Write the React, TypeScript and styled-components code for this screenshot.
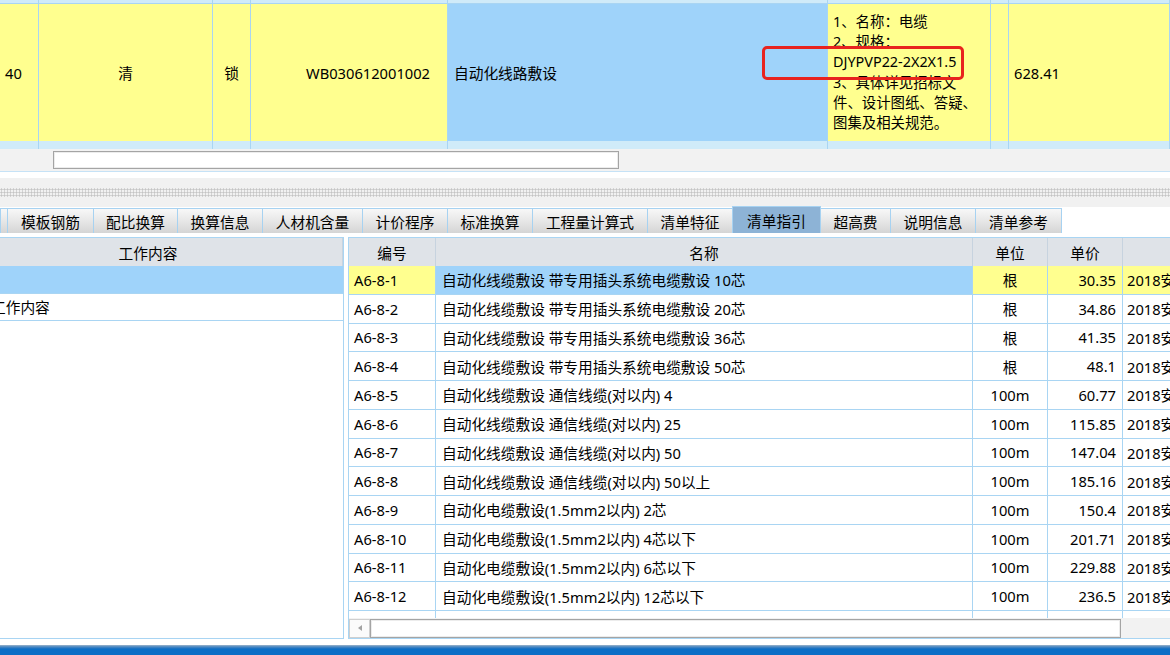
import React from 'react';
import styled, { createGlobalStyle } from 'styled-components';

const GlobalStyle = createGlobalStyle`
  html, body {
    margin: 0;
    padding: 0;
    background: #ffffff;
  }
  body {
    font-family: "Noto Sans", "Noto Sans CJK SC", sans-serif;
    font-size: 14.7px;
    color: #000;
    overflow: hidden;
  }
  * {
    box-sizing: border-box;
  }
`;

const LINE = '#a9d5f3';
const YELLOW = '#ffff8f';
const BLUE = '#9fd3fa';

/** Page */
const Page = styled.div`
  width: 1170px;
  height: 655px;
  display: flex;
  flex-direction: column;
  overflow: hidden;
`;

/** Top grid (bill row) */
const TopPane = styled.div`
  position: relative;
  border-bottom: 1px solid #c6e2f6;
`;

const topCols = '39px 174px 38px 197px 380px 163px 18px 1fr';

const TopRow = styled.div<{ $h: number; $strip?: boolean }>`
  display: grid;
  grid-template-columns: ${topCols};
  height: ${p => p.$h}px;
  background: ${p => (p.$strip ? '#d0ebf9' : YELLOW)};
  border-top: ${p => (p.$strip ? 'none' : `1px solid ${LINE}`)};
`;

const TopCell = styled.div<{ $align?: 'left' | 'center' | 'right'; $blue?: boolean }>`
  border-right: 1px solid ${LINE};
  display: flex;
  align-items: center;
  justify-content: ${p =>
    p.$align === 'center' ? 'center' : p.$align === 'right' ? 'flex-end' : 'flex-start'};
  padding: ${p => (p.$align === 'right' ? '0 17px 0 0' : '0 5px')};
  background: ${p => (p.$blue ? BLUE : 'transparent')};
  white-space: nowrap;
  overflow: hidden;
`;

const FeatureText = styled.div`
  line-height: 20.2px;
  font-size: 14.4px;
  padding-left: 0;
  white-space: nowrap;
`;

const Highlight = styled.div`
  position: absolute;
  left: 762px;
  top: 46px;
  width: 202px;
  height: 34px;
  border: 3px solid #e8231e;
  border-radius: 5px;
  pointer-events: none;
`;

/** Scrollbars */
const HScroll = styled.div<{ $h: number }>`
  height: ${p => p.$h}px;
  background: #f2f2f2;
  display: flex;
  align-items: center;
  flex-shrink: 0;
`;

const Thumb = styled.div<{ $left: number; $width: number }>`
  margin-left: ${p => p.$left}px;
  width: ${p => p.$width}px;
  height: 18px;
  background: #fff;
  border: 1px solid #a4a4a4;
  box-shadow: inset 0 0 0 1px #ececec;
`;

const ArrowButton = styled.div`
  width: 21px;
  height: 19px;
  border: 1px solid #cfcfcf;
  background: #fbfbfb;
  display: flex;
  align-items: center;
  justify-content: center;
  flex-shrink: 0;
  &::before {
    content: '';
    border-style: solid;
    border-width: 3.5px 4px 3.5px 0;
    border-color: transparent #a2a2a2 transparent transparent;
  }
`;

/** Splitter */
const Gap = styled.div<{ $h: number }>`
  height: ${p => p.$h}px;
  flex-shrink: 0;
`;

const Splitter = styled.div`
  height: 29px;
  background: #f1f1f1;
  padding-top: 10px;
  flex-shrink: 0;
`;

const Dots = styled.div`
  height: 9px;
  background-image: radial-gradient(circle, #c4c4c4 0.9px, transparent 1.2px);
  background-size: 3px 3px;
`;

/** Tabs */
const TabBar = styled.div`
  height: 26px;
  display: flex;
  align-items: flex-end;
  background: #fff;
  flex-shrink: 0;
`;

const Tab = styled.div<{ $active?: boolean; $w: number }>`
  width: ${p => p.$w}px;
  height: ${p => (p.$active ? 27 : 25)}px;
  margin-left: -1px;
  border: 1px solid #a7d2f1;
  border-bottom: none;
  display: flex;
  align-items: center;
  justify-content: center;
  white-space: nowrap;
  background: ${p => (p.$active ? '#8db3d6' : 'linear-gradient(#f8f8f8, #d5d5d5)')};
  flex-shrink: 0;
  &:first-child {
    margin-left: 0;
  }
`;

/** Panels */
const Panels = styled.div`
  height: 402px;
  display: flex;
  gap: 4px;
  flex-shrink: 0;
`;

const LeftPanel = styled.div`
  width: 344px;
  border: 1px solid ${LINE};
  border-left: none;
  overflow: hidden;
  flex-shrink: 0;
`;

const Scrolled = styled.div`
  margin-left: -46px;
  width: 389px;
`;

const HeaderCell = styled.div`
  height: 28px;
  background: #dfe3e8;
  display: flex;
  align-items: center;
  justify-content: center;
  border-right: 1px solid #c7d3df;
  white-space: nowrap;
  overflow: hidden;
`;

const LeftRow = styled.div<{ $selected?: boolean }>`
  height: 27.5px;
  display: flex;
  align-items: center;
  padding-left: 37px;
  background: ${p => (p.$selected ? BLUE : '#fff')};
  border-bottom: 1px solid ${LINE};
  white-space: nowrap;
`;

const RightPanel = styled.div`
  flex: 1;
  margin-right: -20px;
  border: 1px solid ${LINE};
  border-right: none;
  display: flex;
  flex-direction: column;
  overflow: hidden;
  min-width: 0;
`;

const cols = '87px 537px 75px 75px 220px';

const GridHead = styled.div`
  display: grid;
  grid-template-columns: ${cols};
  flex-shrink: 0;
`;

const Body = styled.div`
  flex: 1;
  overflow: hidden;
`;

const GridRowBox = styled.div`
  display: grid;
  grid-template-columns: ${cols};
  height: 28.75px;
`;

const Cell = styled.div<{ $align?: 'left' | 'center' | 'right'; $bg?: string }>`
  border-right: 1px solid ${LINE};
  border-bottom: 1px solid ${LINE};
  display: flex;
  align-items: center;
  justify-content: ${p =>
    p.$align === 'center' ? 'center' : p.$align === 'right' ? 'flex-end' : 'flex-start'};
  padding: 0 6px 0 ${p => (p.$align === 'right' ? 0 : 6)}px;
  background: ${p => p.$bg || '#fff'};
  white-space: nowrap;
  overflow: hidden;
`;

const CodeCell = styled(Cell)`
  padding-left: 5px;
`;

const LastCell = styled(Cell)`
  padding-left: 4px;
`;

const StatusBar = styled.div`
  height: 10px;
  flex-shrink: 0;
  background: linear-gradient(#a4b9cc 0, #6b98c4 1px, #2a78c2 3px, #0c6ec6 4px, #0c6ec6 100%);
`;

/** Data */
const tabs: { label: string; w: number; active?: boolean }[] = [
  { label: '', w: 8 },
  { label: '模板钢筋', w: 87 },
  { label: '配比换算', w: 85 },
  { label: '换算信息', w: 86 },
  { label: '人材机含量', w: 101 },
  { label: '计价程序', w: 86 },
  { label: '标准换算', w: 86 },
  { label: '工程量计算式', w: 116 },
  { label: '清单特征', w: 86 },
  { label: '清单指引', w: 89, active: true },
  { label: '超高费', w: 71 },
  { label: '说明信息', w: 86 },
  { label: '清单参考', w: 87 },
];

const rows: [string, string, string, string][] = [
  ['A6-8-1', '自动化线缆敷设 带专用插头系统电缆敷设 10芯', '根', '30.35'],
  ['A6-8-2', '自动化线缆敷设 带专用插头系统电缆敷设 20芯', '根', '34.86'],
  ['A6-8-3', '自动化线缆敷设 带专用插头系统电缆敷设 36芯', '根', '41.35'],
  ['A6-8-4', '自动化线缆敷设 带专用插头系统电缆敷设 50芯', '根', '48.1'],
  ['A6-8-5', '自动化线缆敷设 通信线缆(对以内) 4', '100m', '60.77'],
  ['A6-8-6', '自动化线缆敷设 通信线缆(对以内) 25', '100m', '115.85'],
  ['A6-8-7', '自动化线缆敷设 通信线缆(对以内) 50', '100m', '147.04'],
  ['A6-8-8', '自动化线缆敷设 通信线缆(对以内) 50以上', '100m', '185.16'],
  ['A6-8-9', '自动化电缆敷设(1.5mm2以内) 2芯', '100m', '150.4'],
  ['A6-8-10', '自动化电缆敷设(1.5mm2以内) 4芯以下', '100m', '201.71'],
  ['A6-8-11', '自动化电缆敷设(1.5mm2以内) 6芯以下', '100m', '229.88'],
  ['A6-8-12', '自动化电缆敷设(1.5mm2以内) 12芯以下', '100m', '236.5'],
  ['A6-8-13', '自动化电缆敷设(1.5mm2以内) 20芯以下', '100m', '268.2'],
];

const featureLines = [
  '1、名称：电缆',
  '2、规格：',
  'DJYPVP22-2X2X1.5',
  '3、具体详见招标文',
  '件、设计图纸、答疑、',
  '图集及相关规范。',
];

const StripRow = ({ h }: { h: number }) => (
  <TopRow $h={h} $strip>
    {Array.from({ length: 8 }).map((_, i) => (
      <TopCell key={i} />
    ))}
  </TopRow>
);

export default function App() {
  return (
    <Page>
      <GlobalStyle />

      <TopPane>
        <StripRow h={3} />
        <TopRow $h={138}>
          <TopCell>40</TopCell>
          <TopCell $align="center">清</TopCell>
          <TopCell $align="center">锁</TopCell>
          <TopCell $align="right">WB030612001002</TopCell>
          <TopCell $blue style={{ paddingLeft: 6 }}>自动化线路敷设</TopCell>
          <TopCell>
            <FeatureText>
              {featureLines.map(l => (
                <div key={l}>{l}</div>
              ))}
            </FeatureText>
          </TopCell>
          <TopCell />
          <TopCell>628.41</TopCell>
        </TopRow>
        <StripRow h={8} />
        <HScroll $h={22}>
          <Thumb $left={53} $width={566} />
        </HScroll>
        <Highlight />
      </TopPane>

      <Gap $h={6} />
      <Splitter>
        <Dots />
      </Splitter>

      <TabBar>
        {tabs.map((t, i) => (
          <Tab key={i} $w={t.w} $active={t.active}>
            {t.label}
          </Tab>
        ))}
      </TabBar>
      <Gap $h={4} />

      <Panels>
        <LeftPanel>
          <Scrolled>
            <HeaderCell style={{ borderBottom: 'none' }}>工作内容</HeaderCell>
            <LeftRow $selected />
            <LeftRow>工作内容</LeftRow>
          </Scrolled>
        </LeftPanel>

        <RightPanel>
          <GridHead>
            <HeaderCell>编号</HeaderCell>
            <HeaderCell>名称</HeaderCell>
            <HeaderCell>单位</HeaderCell>
            <HeaderCell>单价</HeaderCell>
            <HeaderCell />
          </GridHead>
          <Body>
            {rows.map(([code, name, unit, price], i) => {
              const sel = i === 0;
              return (
                <GridRowBox key={code}>
                  <CodeCell $bg={sel ? YELLOW : undefined}>{code}</CodeCell>
                  <Cell $bg={sel ? BLUE : undefined}>{name}</Cell>
                  <Cell $align="center" $bg={sel ? YELLOW : undefined}>
                    {unit}
                  </Cell>
                  <Cell $align="right" $bg={sel ? YELLOW : undefined}>
                    {price}
                  </Cell>
                  <LastCell $bg={sel ? YELLOW : undefined}>2018安装定额</LastCell>
                </GridRowBox>
              );
            })}
          </Body>
          <HScroll $h={20}>
            <ArrowButton />
            <Thumb $left={0} $width={751} style={{ height: 19 }} />
          </HScroll>
        </RightPanel>
      </Panels>

      <Gap $h={6} />
      <StatusBar />
    </Page>
  );
}
